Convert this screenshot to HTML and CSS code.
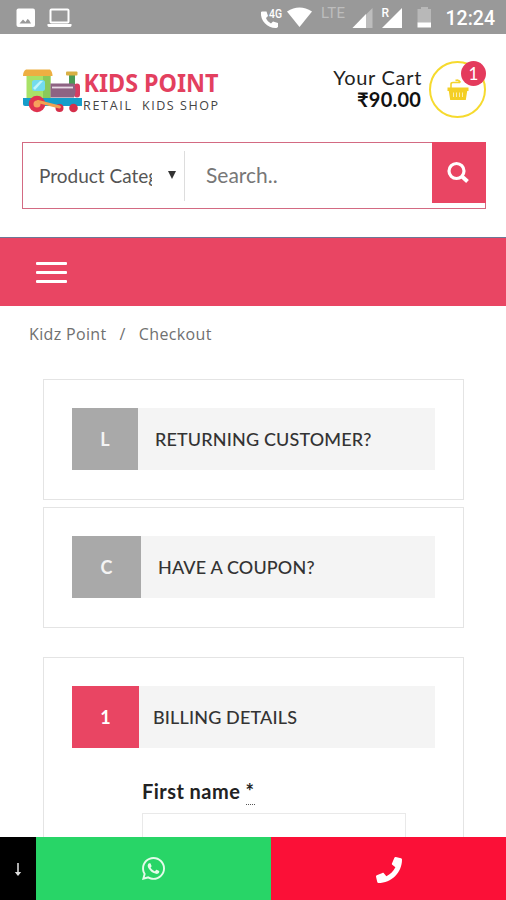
FILE: index.html
```
<!DOCTYPE html>
<html lang="en">
<head>
<meta charset="UTF-8">
<meta name="viewport" content="width=device-width, initial-scale=1">
<title>Checkout - Kidz Point</title>
<link rel="stylesheet" href="styles.css">
</head>
<body>
<div class="screen">
  <div class="status-bar">
    <svg class="status-left" width="80" height="34" viewBox="0 0 80 34">
      <rect x="16.500" y="8.500" width="18.500" height="18.500" rx="2" fill="#fff"/>
      <path d="M19.500 23.500l3.500-4 2.500 2.500 2-3 1.500 1 2 3.500z" fill="#999"/>
      <rect x="50.500" y="9.500" width="18" height="13" rx="1" fill="none" stroke="#fff" stroke-width="2"/>
      <path d="M47.500 24h24v1.500q0 1.500-2 1.500h-20q-2 0-2-1.500z" fill="#fff"/>
    </svg>
    <svg class="status-right" width="190" height="34" viewBox="255 0 190 34">
      <path d="M261 12c-1 9 7 16.500 15.500 16l1.500-1v-4l-5-1.500-2 2c-2.500-1.500-4-3-5-5.500l2-2-1.500-4.500h-4.500z" fill="#fff"/>
      <text x="269" y="17.500" class="net-small" textLength="13" lengthAdjust="spacingAndGlyphs">4G</text>
      <path d="M287 11.500q12.500-8 25 0l-12.500 15.500z" fill="#fff"/>
      <text x="321" y="18" class="net-lte" textLength="24">LTE</text>
      <path d="M372.500 8v20h-20z" fill="#bdbdbd"/>
      <path d="M366 14v14h-13.500z" fill="#fff"/>
      <text x="381.500" y="17" class="net-small">R</text>
      <path d="M402 8v20h-20z" fill="#fff"/>
      <path d="M421 7h7v2h3v14h-13.500v-14h3.500z" fill="#b8b8b8"/>
      <path d="M417.500 22.500h13.500v5h-13.500z" fill="#fff"/>
    </svg>
    <span class="clock">12:24</span>
  </div>

  <header class="header">
    <svg class="logo" width="198" height="48" viewBox="22 68 198 48">
      <path d="M26.500 75h24v24h-24z" fill="#a8e267"/>
      <path d="M43 75h7.500v24h-7.500z" fill="#8ac95a"/>
      <path d="M26 69.500h24q2.500 2 2.500 6.500h-29.500q0-5 3-6.500z" fill="#edaf42"/>
      <rect x="32" y="80" width="13" height="11" rx="2.500" fill="#73dbed"/>
      <path d="M33 88l7-7h3l-8 9z" fill="#c0f5fb"/>
      <path d="M69 75h6v10h-6z" fill="#4b9b55"/>
      <rect x="66" y="71.500" width="11.500" height="4" rx="1" fill="#d9b044"/>
      <rect x="74" y="83.500" width="6" height="14" rx="3" fill="#d93c62"/>
      <path d="M50.500 83.500h23.500q3 7 0 14h-23.500z" fill="#8e6383"/>
      <path d="M52 87.500h21" stroke="#eadce8" stroke-width="1.800"/>
      <path d="M23 98h59v8h-57q-2 0-2-2z" fill="#169dca"/>
      <circle cx="59.500" cy="108" r="4" fill="#d52f4b"/>
      <circle cx="73.500" cy="108" r="4.300" fill="#d52f4b"/>
      <circle cx="37" cy="104" r="8.300" fill="#df334f"/>
      <circle cx="37" cy="104" r="3.500" fill="#f8a05e"/>
      <path d="M38 101.500l21.500 5.500" stroke="#f2a252" stroke-width="3" stroke-linecap="round"/>
      <text x="83.500" y="91.500" class="logo-name" textLength="135" lengthAdjust="spacingAndGlyphs">KIDS POINT</text>
      <text x="83" y="109.500" class="logo-sub" textLength="48">RETAIL</text>
      <text x="142" y="109.500" class="logo-sub" textLength="76">KIDS SHOP</text>
    </svg>
    <div class="cart">
      <div class="cart-text">
        <div class="cart-label">Your Cart</div>
        <div class="cart-total">₹90.00</div>
      </div>
      <div class="cart-circle">
        <svg width="22" height="22" viewBox="0 0 22 22">
          <path d="M4 9V5q0-1.500 2-1.500h7M8.500 1.500q3-1.500 5 2" fill="none" stroke="#f4d32c" stroke-width="1.600"/>
          <path d="M.5 8.500h21v3.500h-1.300l-1.400 9h-15.600l-1.400-9h-1.300z" fill="#f4cf25"/>
          <path d="M6.500 13.500v4.500M9.500 13.500v4.500M12.500 13.500v4.500M15.500 13.500v4.500" stroke="#fbeeb0" stroke-width="1"/>
        </svg>
        <span class="badge">1</span>
      </div>
    </div>
  </header>

  <form class="search">
    <div class="category"><span class="category-name">Product Categories</span><i class="caret"></i></div>
    <div class="search-input">Search..</div>
    <div class="search-button">
      <svg width="24" height="24" viewBox="0 0 24 24" fill="none" stroke="#fff">
        <circle cx="10.500" cy="10" r="7.500" stroke-width="3.200"/>
        <path d="M16 15.500l5.500 5" stroke-width="4"/>
      </svg>
    </div>
  </form>

  <nav class="nav">
    <div class="hamburger"><i></i><i></i><i></i></div>
  </nav>

  <div class="breadcrumb"><span>Kidz Point</span><span>/</span><span>Checkout</span></div>

  <main class="checkout">
    <section class="card">
      <h3 class="step"><span class="step-key">L</span><span class="step-title">RETURNING CUSTOMER?</span></h3>
    </section>
    <section class="card">
      <h3 class="step"><span class="step-key key-coupon">C</span><span class="step-title">HAVE A COUPON?</span></h3>
    </section>
    <section class="card card-billing">
      <h3 class="step"><span class="step-key key-billing">1</span><span class="step-title title-billing">BILLING DETAILS</span></h3>
      <div class="field">
        <label>First name <abbr>*</abbr></label>
        <div class="field-input"></div>
      </div>
    </section>
  </main>

  <footer class="bottom-bar">
    <div class="bar-down">
      <svg width="8" height="14" viewBox="0 0 8 14"><path d="M4 0v10" stroke="#ccc" stroke-width="1.700"/><path d="M.8 9h6.400l-3.200 4z" fill="#ddd"/></svg>
    </div>
    <div class="bar-whatsapp">
      <svg width="23" height="23" viewBox="0 0 448 448" fill="#e4fbea">
        <path d="M380.900 65.100C339 23.100 283.200 0 223.900 0 101.500 0 1.900 99.600 1.900 222c0 39.100 10.200 77.300 29.600 111L0 448l117.700-30.900c32.400 17.700 68.900 27 106.100 27h.1c122.300 0 224.100-99.600 224.100-222 0-59.300-25.200-115-67.100-157zm-157 341.600c-33.200 0-65.700-8.900-94-25.700l-6.700-4-69.800 18.300L72 327.200l-4.400-7c-18.500-29.400-28.200-63.300-28.200-98.200 0-101.700 82.800-184.500 184.600-184.500 49.300 0 95.600 19.200 130.400 54.100 34.800 34.900 56.200 81.200 56.100 130.500 0 101.800-84.900 184.600-186.600 184.600zm101.200-138.200c-5.500-2.800-32.800-16.200-37.900-18-5.100-1.900-8.800-2.800-12.500 2.800-3.700 5.600-14.300 18-17.600 21.800-3.200 3.700-6.500 4.200-12 1.400-32.600-16.300-54-29.100-75.500-66-5.700-9.800 5.700-9.100 16.300-30.300 1.800-3.700.9-6.900-.5-9.700-1.400-2.800-12.500-30.100-17.100-41.200-4.500-10.800-9.100-9.300-12.500-9.500-3.200-.2-6.900-.2-10.600-.2-3.700 0-9.700 1.400-14.800 6.900-5.100 5.600-19.400 19-19.400 46.300 0 27.300 19.900 53.700 22.600 57.400 2.800 3.700 39.100 59.700 94.800 83.800 35.200 15.200 49 16.500 66.600 13.900 10.700-1.600 32.800-13.400 37.400-26.400 4.600-13 4.600-24.100 3.200-26.400-1.300-2.500-5-3.900-10.500-6.600z"/>
      </svg>
    </div>
    <div class="bar-call">
      <svg width="26" height="26" viewBox="0 0 512 512" fill="#fff">
        <path d="M493.400 24.600l-104-24c-11.300-2.600-22.900 3.300-27.500 13.900l-48 112c-4.200 9.800-1.400 21.300 6.900 28l60.600 49.600c-36 76.700-98.900 140.500-177.200 177.200l-49.600-60.600c-6.800-8.300-18.200-11.100-28-6.900l-112 48C3.900 366.500-2 378.100.6 389.400l24 104C27.100 504.200 36.700 512 48 512c256.100 0 464-207.500 464-464 0-11.200-7.700-20.900-18.600-23.400z"/>
      </svg>
    </div>
  </footer>
</div>
</body>
</html>
```
FILE: styles.css
```
* {
  box-sizing: border-box;
}
body {
  margin: 0;
  background: #fff;
  font-family: Lato, sans-serif;
}
svg {
  display: block;
}
.screen {
  width: 506px;
  height: 900px;
  display: flex;
  flex-direction: column;
  overflow: hidden;
}
.status-bar {
  height: 34px;
  flex: none;
  display: flex;
  align-items: center;
  background: #999;
  padding-right: 11px;
}
.status-right {
  margin-left: auto;
  margin-right: -1px;
}
.net-small {
  font: 500 12px Roboto, sans-serif;
  fill: #fff;
}
.net-lte {
  font: 15px Roboto, sans-serif;
  fill: #bdbdbd;
}
.clock {
  width: 51px;
  margin-top: 2px;
  text-align: right;
  white-space: nowrap;
  font: 500 19.500px Roboto, sans-serif;
  color: #fff;
}
.header {
  height: 108px;
  flex: none;
  display: flex;
  justify-content: space-between;
  padding: 27px 20px 0 22px;
}
.logo {
  margin-top: 7px;
  overflow: visible;
}
.logo-name {
  font: bold 24.500px "Noto Sans", sans-serif;
  fill: #e3405f;
}
.logo-sub {
  font: 12.500px "Open Sans", sans-serif;
  fill: #444;
}
.cart {
  display: flex;
  gap: 8px;
}
.cart-text {
  padding-top: 5px;
  text-align: right;
  font-size: 20px;
  line-height: 22px;
  color: #222;
}
.cart-label {
  letter-spacing: 0.7px;
  margin-right: -1px;
}
.cart-total {
  font-weight: bold;
  letter-spacing: 0.2px;
  color: #111;
}
.cart-circle {
  position: relative;
  width: 57px;
  height: 57px;
  display: flex;
  align-items: center;
  justify-content: center;
  border: 2px solid #f6da2e;
  border-radius: 50%;
}
.badge {
  position: absolute;
  top: -2px;
  right: -2px;
  width: 25px;
  height: 25px;
  border-radius: 50%;
  background: #e43a5c;
  color: #fff;
  font-size: 17px;
  line-height: 25px;
  text-align: center;
}
.search {
  width: 464px;
  height: 67px;
  flex: none;
  margin: 0 0 28px 22px;
  display: flex;
  border: 1.500px solid #d36a82;
}
.category {
  width: 162px;
  height: 50px;
  margin-top: 8px;
  padding: 0 8px 2px 16px;
  display: flex;
  align-items: center;
  justify-content: space-between;
  border-right: 1px solid #ddd;
}
.category-name {
  width: 113px;
  overflow: hidden;
  white-space: nowrap;
  font-size: 19px;
  color: #555;
}
.caret {
  border: 4.500px solid transparent;
  border-top: 8px solid #333;
  border-bottom: 0;
}
.search-input {
  flex: 1;
  padding-left: 21px;
  font-size: 21px;
  line-height: 64px;
  color: #777;
}
.search-button {
  width: 54px;
  height: 61px;
  margin: -1px -1px 0 0;
  padding: 1px 2px 0 0;
  display: flex;
  align-items: center;
  justify-content: center;
  background: #e94563;
}
.nav {
  height: 69px;
  flex: none;
  padding: 24px 36px;
  border-top: 1px solid #6e7795;
  background: #e94563;
}
.hamburger {
  width: 31px;
  display: grid;
  gap: 6px;
}
.hamburger i {
  height: 3px;
  border-radius: 1px;
  background: #fff;
}
.breadcrumb {
  height: 73px;
  flex: none;
  display: flex;
  gap: 13px;
  padding: 16px 29px 0;
  font: 16px/24px "Open Sans", sans-serif;
  letter-spacing: 0.350px;
  color: #707070;
}
.checkout {
  flex: 1;
  min-height: 0;
  overflow: hidden;
  padding: 0 42px 0 43px;
}
.card {
  height: 121px;
  margin-bottom: 7px;
  padding: 28px;
  border: 1px solid #e4e4e4;
}
.card-billing {
  height: 260px;
  margin-top: 29px;
}
.step {
  height: 62px;
  margin: 0;
  display: flex;
  align-items: center;
  background: #f4f4f4;
  font-size: 18px;
  font-weight: 500;
  letter-spacing: 0.150px;
  color: #333;
}
.step-key {
  width: 66px;
  height: 62px;
  line-height: 62px;
  text-align: center;
  font-weight: bold;
  background: #a9a9a9;
  color: #f4f4f4;
}
.key-coupon {
  width: 69px;
}
.key-billing {
  width: 67px;
  background: #e94563;
  color: #fff;
}
.step-title {
  padding-left: 17px;
}
.title-billing {
  padding-left: 14px;
}
.field {
  width: 264px;
  margin: 28px 0 0 70px;
}
.field label {
  display: block;
  font-size: 20px;
  font-weight: bold;
  line-height: 30px;
  letter-spacing: 0.450px;
  color: #222;
}
.field abbr {
  padding-bottom: 1px;
  border-bottom: 1px dotted #555;
}
.field-input {
  height: 58px;
  margin-top: 7px;
  border: 1px solid #e9e9e9;
}
.bottom-bar {
  height: 63px;
  flex: none;
  display: flex;
}
.bottom-bar > div {
  display: flex;
  align-items: center;
  justify-content: center;
}
.bar-down {
  width: 36px;
  padding-top: 3px;
  background: #000;
}
.bar-whatsapp {
  width: 235px;
  background: #28d567;
}
.bar-call {
  flex: 1;
  padding-top: 2px;
  background: #fb1037;
}
```
